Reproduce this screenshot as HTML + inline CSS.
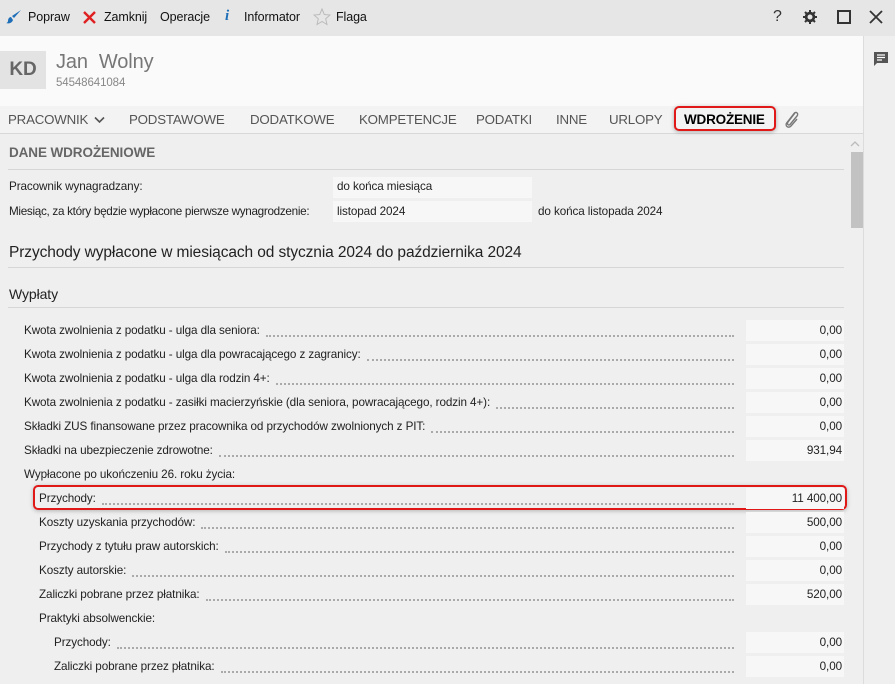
<!DOCTYPE html>
<html><head><meta charset="utf-8"><style>
*{margin:0;padding:0;box-sizing:border-box}
body{width:895px;height:684px;overflow:hidden;background:#efefef;font-family:"Liberation Sans",sans-serif;font-size:11.7px;color:#222;position:relative;letter-spacing:-0.1px}
.abs{position:absolute}
#tb{left:0;top:0;width:895px;height:36px;background:#e6e6e6}
#tb span{position:absolute;top:10px;font-size:12.5px;color:#111}
#hdr{left:0;top:36px;width:863px;height:70px;background:#fafafa}
#side{left:863px;top:36px;width:32px;height:648px;background:#efefef;border-left:1px solid #dcdcdc}
#tabs{left:0;top:106px;width:863px;height:28px;background:#f3f3f3;border-bottom:1px solid #d8d8d8}
#tabs span{position:absolute;top:6px;font-size:13.3px;color:#555;letter-spacing:-0.2px}
.lbl{position:absolute;color:#222;white-space:nowrap}
.row{position:absolute;height:22px;display:flex;align-items:center}
.row .t{white-space:nowrap;padding-right:6px}
.row .d{flex:1;border-bottom:2px dotted #aaa;height:2px;margin-top:12px;margin-right:6px}
.val{position:absolute;left:746px;width:98px;height:21px;background:#f7f7f7;text-align:right;padding-right:2px;line-height:21px}
.hr{position:absolute;left:8px;width:836px;height:1px;background:#d6d6d6}
</style></head><body>
<div id="tb" class="abs">
<svg class="abs" style="left:6px;top:9px" width="16" height="16" viewBox="0 0 16 16"><path d="M15 1 L8 9 L6 7 Z" fill="#1e6fb8"/><path d="M5 8 C3 8 2 10 2 12 C2 13 1 14 0 14 C3 15 6 14 7 11 Z" fill="#1e6fb8"/></svg>
<span style="left:28px">Popraw</span>
<svg class="abs" style="left:83px;top:11px" width="13" height="13" viewBox="0 0 13 13"><path d="M1 1L12 12M12 1L1 12" stroke="#e02020" stroke-width="2.4"/></svg>
<span style="left:104px">Zamknij</span>
<span style="left:160px">Operacje</span>
<span style="left:225px;font-family:'Liberation Serif',serif;font-style:italic;font-weight:bold;color:#1e6fb8;font-size:15px;top:8px">i</span>
<span style="left:244px">Informator</span>
<svg class="abs" style="left:313px;top:8px" width="18" height="18" viewBox="0 0 18 18"><path d="M9 1 L11.3 6.5 L17 7 L12.7 10.8 L14 16.5 L9 13.5 L4 16.5 L5.3 10.8 L1 7 L6.7 6.5 Z" fill="none" stroke="#bbb" stroke-width="1"/></svg>
<span style="left:336px">Flaga</span>
<span style="left:773px;font-size:16px;top:8px;color:#333">?</span>
<svg class="abs" style="left:802px;top:9px" width="16" height="16" viewBox="0 0 16 16"><circle cx="8" cy="8" r="4" fill="none" stroke="#333" stroke-width="2.5"/><path d="M8 1V15M1 8H15M3 3L13 13M13 3L3 13" stroke="#333" stroke-width="2"/><circle cx="8" cy="8" r="2.5" fill="#e6e6e6"/></svg>
<div class="abs" style="left:837px;top:10px;width:14px;height:14px;border:2px solid #333"></div>
<svg class="abs" style="left:869px;top:10px" width="14" height="14" viewBox="0 0 14 14"><path d="M1 1L13 13M13 1L1 13" stroke="#333" stroke-width="1.8"/></svg>
</div>
<div id="hdr" class="abs">
<div class="abs" style="left:0;top:15px;width:46px;height:38px;background:#e3e3e3;color:#666;font-size:19px;font-weight:bold;text-align:center;line-height:38px">KD</div>
<div class="abs" style="left:56px;top:15px;font-size:20px;color:#777">Jan&nbsp; Wolny</div>
<div class="abs" style="left:56px;top:41px;font-size:11.5px;color:#888">54548641084</div>
</div>
<div id="side" class="abs">
<svg class="abs" style="left:8px;top:15px" width="17" height="17" viewBox="0 0 17 17"><path d="M2 1H16V12H5L2 15Z" fill="#555"/><path d="M5 4H13M5 6.5H13M5 9H10" stroke="#fff" stroke-width="1.2"/></svg>
</div>
<div id="tabs" class="abs">
<span style="left:8px">PRACOWNIK</span>
<svg class="abs" style="left:94px;top:10px" width="11" height="8" viewBox="0 0 11 8"><path d="M1 1.5L5.5 6L10 1.5" fill="none" stroke="#555" stroke-width="1.6"/></svg>
<span style="left:129px">PODSTAWOWE</span>
<span style="left:250px">DODATKOWE</span>
<span style="left:359px">KOMPETENCJE</span>
<span style="left:476px">PODATKI</span>
<span style="left:556px">INNE</span>
<span style="left:609px">URLOPY</span>
<div class="abs" style="left:674px;top:0px;width:102px;height:25px;border:2px solid #e01818;border-radius:5px;box-shadow:0 1px 4px rgba(0,0,0,.3);background:#f3f3f3"></div>
<span style="left:684px;color:#000;font-weight:bold;font-size:13.5px">WDROŻENIE</span>
<svg class="abs" style="left:783px;top:4px" width="18" height="20" viewBox="0 0 18 20"><path d="M12 3 L5 12 C3.5 14 5.5 16 7 14.5 L14 6 C16 3.5 13 1 11 3.5 L4 12.5 C1.5 15.5 5 19 8 16 L14 9" fill="none" stroke="#777" stroke-width="1.4"/></svg>
</div>
<svg class="abs" style="left:849px;top:140px" width="12" height="8" viewBox="0 0 12 8"><path d="M2 6L6 2L10 6" fill="none" stroke="#bbb" stroke-width="1.3"/></svg>
<div class="abs" style="left:851px;top:152px;width:12px;height:76px;background:#c2c2c2"></div>

<div class="lbl" style="left:9px;top:145px;font-size:13.5px;font-weight:bold;color:#666">DANE WDROŻENIOWE</div>
<div class="hr" style="top:169px"></div>
<div class="lbl" style="left:9px;top:180px">Pracownik wynagradzany:</div>
<div class="abs" style="left:333px;top:177px;width:199px;height:21px;background:#f7f7f7"></div>
<div class="lbl" style="left:337px;top:180px">do końca miesiąca</div>
<div class="lbl" style="left:9px;top:205px;letter-spacing:-0.3px">Miesiąc, za który będzie wypłacone pierwsze wynagrodzenie:</div>
<div class="abs" style="left:333px;top:201px;width:199px;height:21px;background:#f7f7f7"></div>
<div class="lbl" style="left:337px;top:205px">listopad 2024</div>
<div class="lbl" style="left:538px;top:205px">do końca listopada 2024</div>
<div class="lbl" style="left:9px;top:244px;font-size:15.5px">Przychody wypłacone w miesiącach od stycznia 2024 do października 2024</div>
<div class="hr" style="top:267px"></div>
<div class="lbl" style="left:9px;top:286px;font-size:14px">Wypłaty</div>
<div class="hr" style="top:307px"></div>

<div class="abs" style="left:33px;top:485px;width:814px;height:25px;border:2px solid #e01818;border-radius:5px;box-shadow:0 1px 4px rgba(0,0,0,.25)"></div>

<div class="row" style="left:24px;width:716px;top:319px"><span class="t">Kwota zwolnienia z podatku - ulga dla seniora:</span><span class="d"></span></div><div class="val" style="top:320px">0,00</div>
<div class="row" style="left:24px;width:716px;top:343px"><span class="t">Kwota zwolnienia z podatku - ulga dla powracającego z zagranicy:</span><span class="d"></span></div><div class="val" style="top:344px">0,00</div>
<div class="row" style="left:24px;width:716px;top:367px"><span class="t">Kwota zwolnienia z podatku - ulga dla rodzin 4+:</span><span class="d"></span></div><div class="val" style="top:368px">0,00</div>
<div class="row" style="left:24px;width:716px;top:391px"><span class="t">Kwota zwolnienia z podatku - zasiłki macierzyńskie (dla seniora, powracającego, rodzin 4+):</span><span class="d"></span></div><div class="val" style="top:392px">0,00</div>
<div class="row" style="left:24px;width:716px;top:415px"><span class="t">Składki ZUS finansowane przez pracownika od przychodów zwolnionych z PIT:</span><span class="d"></span></div><div class="val" style="top:416px">0,00</div>
<div class="row" style="left:24px;width:716px;top:439px"><span class="t">Składki na ubezpieczenie zdrowotne:</span><span class="d"></span></div><div class="val" style="top:440px">931,94</div>
<div class="row" style="left:24px;width:716px;top:463px"><span class="t">Wypłacone po ukończeniu 26. roku życia:</span></div>
<div class="row" style="left:39px;width:701px;top:487px"><span class="t">Przychody:</span><span class="d"></span></div><div class="val" style="top:488px">11 400,00</div>
<div class="row" style="left:39px;width:701px;top:511px"><span class="t">Koszty uzyskania przychodów:</span><span class="d"></span></div><div class="val" style="top:512px">500,00</div>
<div class="row" style="left:39px;width:701px;top:535px"><span class="t">Przychody z tytułu praw autorskich:</span><span class="d"></span></div><div class="val" style="top:536px">0,00</div>
<div class="row" style="left:39px;width:701px;top:559px"><span class="t">Koszty autorskie:</span><span class="d"></span></div><div class="val" style="top:560px">0,00</div>
<div class="row" style="left:39px;width:701px;top:583px"><span class="t">Zaliczki pobrane przez płatnika:</span><span class="d"></span></div><div class="val" style="top:584px">520,00</div>
<div class="row" style="left:39px;width:701px;top:607px"><span class="t">Praktyki absolwenckie:</span></div>
<div class="row" style="left:54px;width:686px;top:631px"><span class="t">Przychody:</span><span class="d"></span></div><div class="val" style="top:632px">0,00</div>
<div class="row" style="left:54px;width:686px;top:655px"><span class="t">Zaliczki pobrane przez płatnika:</span><span class="d"></span></div><div class="val" style="top:656px">0,00</div>
</body></html>
